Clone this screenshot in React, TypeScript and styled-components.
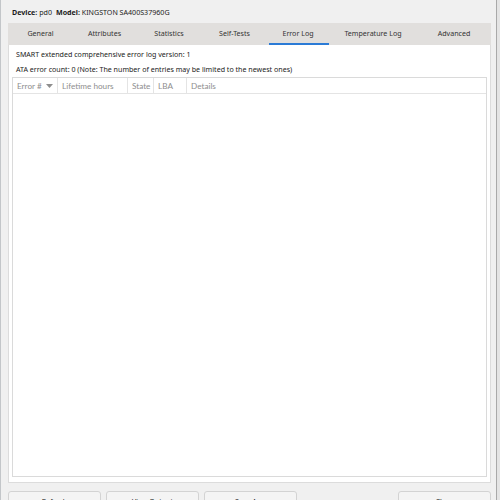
import React from "react";
import styled, { createGlobalStyle } from "styled-components";

const GlobalStyle = createGlobalStyle`
  html, body {
    margin: 0;
    padding: 0;
    background: #f0f0f0;
    overflow: hidden;
  }
  body {
    font-family: "Noto Sans", "Open Sans", "Liberation Sans", sans-serif;
    font-size: 7.1px;
    color: #1b1b1b;
  }
`;

const Window = styled.div`
  width: 500px;
  height: 500px;
  box-sizing: border-box;
  padding: 0 6px 0 7px;
  display: flex;
  flex-direction: column;
  overflow: hidden;
  background: #f0f0f0;
  border-left: 1px solid #c3c6c9;
  border-right: 3px solid #e4e4e4;
  box-shadow: inset -1px 0 0 #a9a9a9;

  & > * {
    flex: none;
  }
`;

const InfoBar = styled.div`
  height: 23px;
  display: flex;
  align-items: center;
  padding-left: 4px;
  gap: 4px;
  white-space: nowrap;
`;

const Field = styled.span`
  b {
    font-weight: 700;
  }
`;

const TabBar = styled.div`
  height: 22px;
  display: flex;
  background: #e1dfdd;
`;

const Tab = styled.div<{ $w: number }>`
  width: ${(p) => p.$w}px;
  flex: none;
  display: flex;
  flex-direction: column;
  color: #333;
`;

const TabLabel = styled.span`
  flex: 1;
  display: flex;
  align-items: center;
  justify-content: center;
  white-space: nowrap;
`;

const TabIndicator = styled.div<{ $active?: boolean }>`
  height: 2px;
  margin: 0 0 0 2px;
  background: ${(p) => (p.$active ? "#2b7bd6" : "transparent")};
`;

const Panel = styled.div`
  height: 438px;
  box-sizing: border-box;
  background: #fff;
  border: 1px solid #dcdcdc;
  border-top: none;
  padding: 2px 3px 5px;
  display: flex;
  flex-direction: column;
`;

const InfoLine = styled.div`
  height: 15px;
  line-height: 15px;
  padding-left: 4px;
  white-space: nowrap;
`;

const Table = styled.div`
  flex: 1;
  border: 1px solid #dadada;
  display: flex;
  flex-direction: column;
`;

const HeaderRow = styled.div`
  height: 15px;
  display: flex;
  border-bottom: 1px solid #e4e4e4;
`;

const HeaderCell = styled.div<{ $w?: number }>`
  ${(p) => (p.$w ? `width: ${p.$w}px; flex: none;` : "flex: 1;")}
  box-sizing: border-box;
  padding-left: 4px;
  display: flex;
  align-items: center;
  gap: 4px;
  font-family: Lato, "Noto Sans", sans-serif;
  font-size: 8.2px;
  color: #8e8e8e;
  border-right: 1px solid #e4e4e4;
  white-space: nowrap;

  &:last-child {
    border-right: none;
  }
`;

const SortArrow = styled.svg`
  width: 7px;
  height: 4px;
  fill: #8e8e8e;
`;

const ButtonRow = styled.div`
  margin-top: 8px;
  display: flex;
  gap: 5px;
`;

const Button = styled.button<{ $push?: boolean }>`
  width: 93px;
  height: 23px;
  flex: none;
  ${(p) => (p.$push ? "margin-left: auto;" : "")}
  border: 1px solid #d3d3d3;
  border-radius: 3px;
  background: #f4f4f4;
  font: inherit;
  color: #1b1b1b;
  padding: 0 0 3px;
`;

const tabs = [
  { label: "General", w: 65 },
  { label: "Attributes", w: 63 },
  { label: "Statistics", w: 66 },
  { label: "Self-Tests", w: 65 },
  { label: "Error Log", w: 62, active: true },
  { label: "Temperature Log", w: 88 },
  { label: "Advanced", w: 74 },
];

export default function App() {
  return (
    <>
      <GlobalStyle />
      <Window>
        <InfoBar>
          <Field>
            <b>Device:</b> pd0
          </Field>
          <Field>
            <b>Model:</b> KINGSTON SA400S37960G
          </Field>
        </InfoBar>
        <TabBar>
          {tabs.map((t) => (
            <Tab key={t.label} $w={t.w}>
              <TabLabel>{t.label}</TabLabel>
              <TabIndicator $active={t.active} />
            </Tab>
          ))}
        </TabBar>
        <Panel>
          <InfoLine>SMART extended comprehensive error log version: 1</InfoLine>
          <InfoLine>
            ATA error count: 0 (Note: The number of entries may be limited to
            the newest ones)
          </InfoLine>
          <Table>
            <HeaderRow>
              <HeaderCell $w={45}>
                Error #
                <SortArrow viewBox="0 0 7 4">
                  <path d="M0 0h7L3.5 4z" />
                </SortArrow>
              </HeaderCell>
              <HeaderCell $w={70}>Lifetime hours</HeaderCell>
              <HeaderCell $w={26}>State</HeaderCell>
              <HeaderCell $w={33}>LBA</HeaderCell>
              <HeaderCell>Details</HeaderCell>
            </HeaderRow>
          </Table>
        </Panel>
        <ButtonRow>
          <Button>Refresh</Button>
          <Button>View Output</Button>
          <Button>Save As...</Button>
          <Button $push>Close</Button>
        </ButtonRow>
      </Window>
    </>
  );
}
